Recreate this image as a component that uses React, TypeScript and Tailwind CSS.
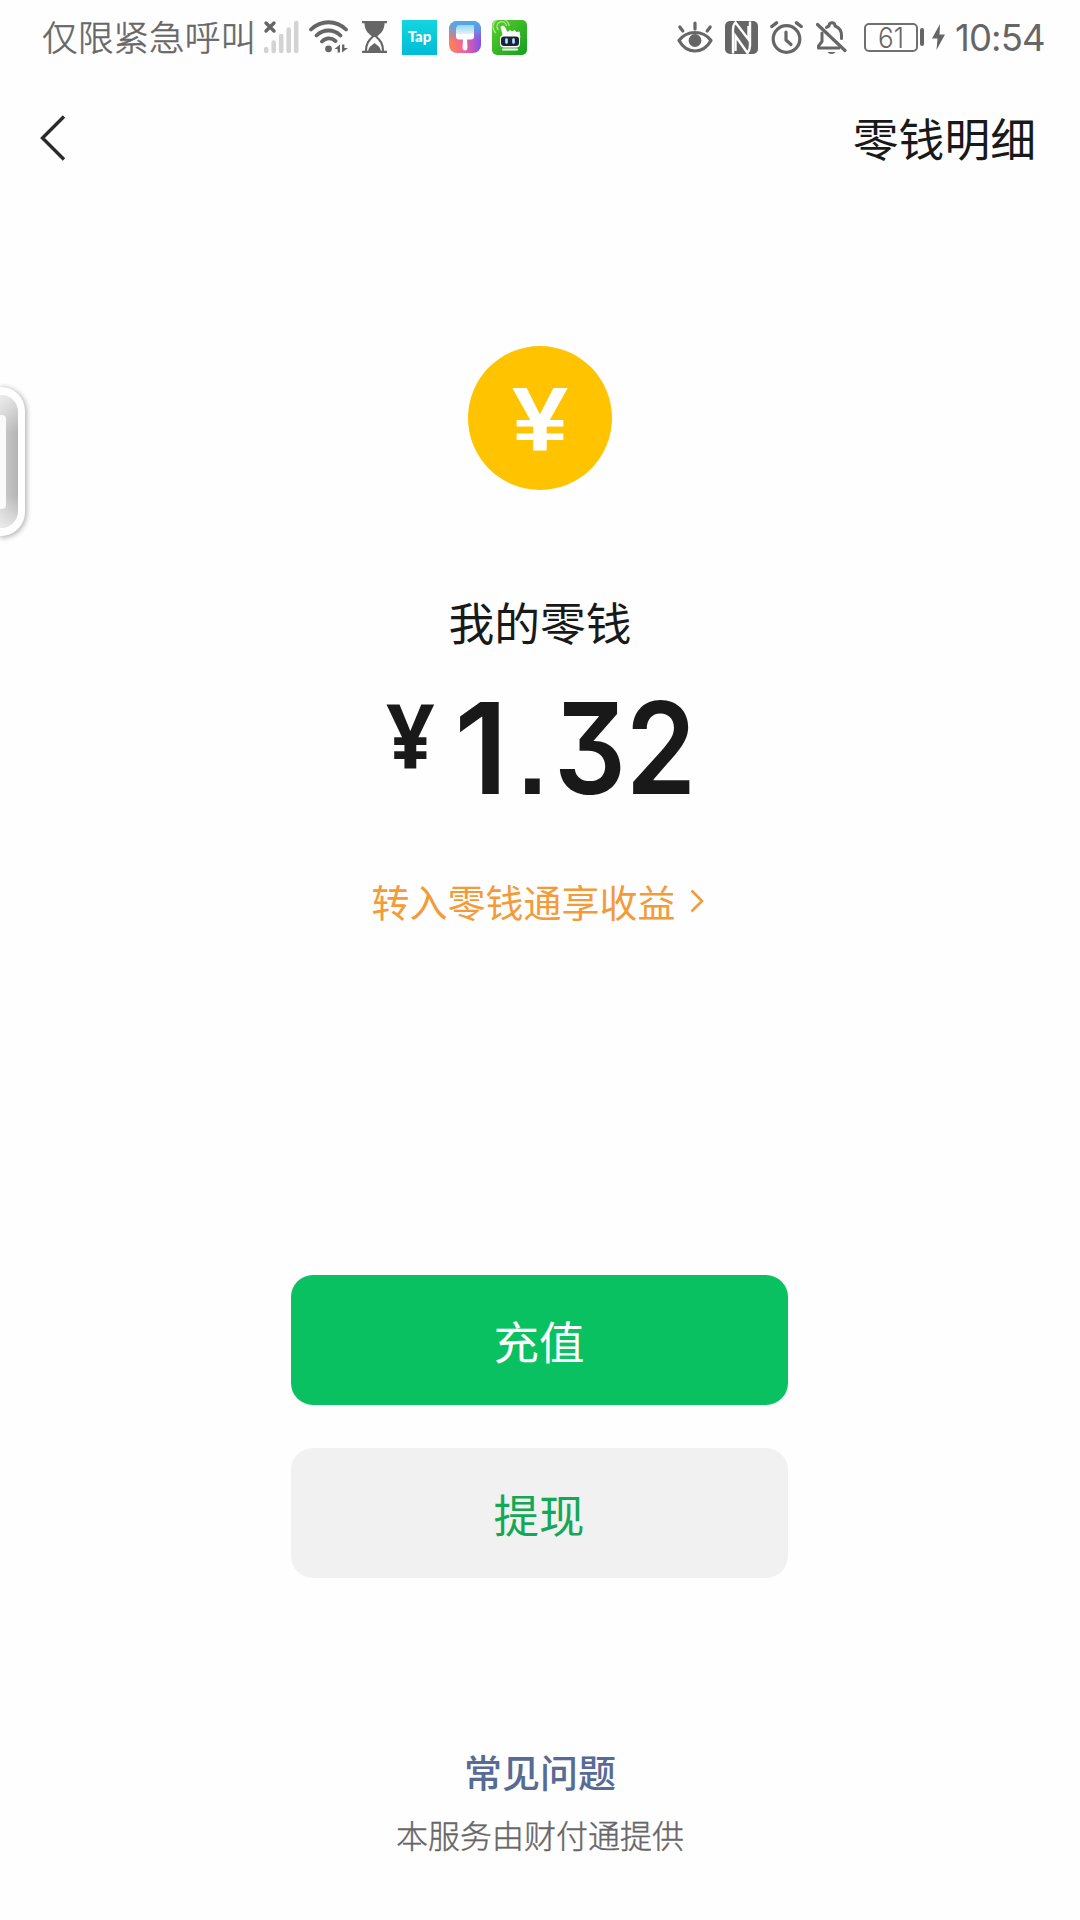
import { ReactNode } from 'react';

function SignalIcon() {
  return (
    <svg className="ml-[7px] h-[34px] w-9 shrink-0" viewBox="0 0 36 34" fill="none" strokeLinecap="round">
      <path d="M3 3l8 8M11 3l-8 8" stroke="#666" strokeWidth="3.4" />
      <path d="M3.2 29v2M10.7 22.5v8.5M18.2 16v15M25.7 9.5v21.500M33.200 3v28" stroke="#d3d3d3" strokeWidth="4.6" />
    </svg>
  );
}

function WifiIcon() {
  return (
    <svg className="ml-[10px] h-[34px] w-10 shrink-0" viewBox="0 0 40 34" fill="none">
      <path d="M2 9.500C12-.2 27-.2 37 9.500M7.500 15.500c7-6.700 17-6.700 24 0M13 21.500c4-4 9.500-4 13.500-.5" stroke="#666" strokeWidth="3.800" strokeLinecap="round" />
      <circle cx="19.500" cy="28.800" r="3.400" fill="#666" />
      <path d="M31 24.500v8h-2.400v-3.500H25.500zM33 32.500v-8h2.400v3.500H39z" fill="#666" />
    </svg>
  );
}

function HourglassIcon() {
  return (
    <svg className="ml-[13px] h-8 w-[25px] shrink-0" viewBox="0 0 25 32" fill="none">
      <path d="M0 1.200h25M0 30.800h25" stroke="#666" strokeWidth="2.200" />
      <path d="M2.500 2h20c0 7-3.300 10-8 14h-4c-4.700-4-8-7-8-14z" fill="#666" />
      <path d="M11 15.500c-4.500 4-7 7-7 14.500M14 15.500c4.500 4 7 7 7 14.500" stroke="#666" strokeWidth="2.200" />
      <path d="M12.500 22l3 2.500c2 1 3 3 3.500 6H6c.5-3 1.500-5 3.500-6z" fill="#666" />
    </svg>
  );
}

function BrushAppIcon() {
  return (
    <svg className="ml-3 h-8 w-8 shrink-0" viewBox="0 0 32 32">
      <defs>
        <linearGradient id="brush-bg" x1="0" y1="0" x2="1" y2="0">
          <stop offset="0" stopColor="#fb8550" />
          <stop offset=".5" stopColor="#f0629b" />
          <stop offset="1" stopColor="#8350ea" />
        </linearGradient>
        <linearGradient id="brush-top" x1="0" y1="0" x2="0" y2="1">
          <stop offset="0" stopColor="#43acf0" />
          <stop offset=".3" stopColor="#56a7e8" stopOpacity=".7" />
          <stop offset=".65" stopColor="#8a70e8" stopOpacity="0" />
        </linearGradient>
        <linearGradient id="brush-head" x1="0" y1="0" x2="0" y2="1">
          <stop offset="0" stopColor="#8fd8f4" />
          <stop offset="1" stopColor="#e5f0fa" />
        </linearGradient>
      </defs>
      <rect width="32" height="32" rx="8" fill="url(#brush-bg)" />
      <rect width="32" height="32" rx="8" fill="url(#brush-top)" />
      <path d="M9 4h16v9H7V7z" fill="url(#brush-head)" />
      <path d="M7 13h18v2.500q0 3-3 3h-4l.5 8.500q-.5 2.500-2.500 2.500T13.500 27l.5-8.500h-4q-3 0-3-3z" fill="#fff" />
    </svg>
  );
}

function RobotAppIcon() {
  return (
    <svg className="ml-[11px] h-[35px] w-[35px] shrink-0" viewBox="0 0 35 35">
      <defs>
        <linearGradient id="robot-bg" x1="0" y1="0" x2="1" y2="1">
          <stop offset="0" stopColor="#5bcf2c" />
          <stop offset="1" stopColor="#159f20" />
        </linearGradient>
      </defs>
      <rect width="35" height="35" rx="5" fill="url(#robot-bg)" />
      <path d="M4 13a8 8 0 1 1 13-7M6.500 10a4.800 4.800 0 1 1 8-4" fill="none" stroke="#a6e88b" strokeWidth="1.300" />
      <path d="M8.500 7q2.500-3 4.500 0l2.500 5 2.500-2 2 1.500 2.500-1.500 2 2 3-.5 1 6H11l-1-5z" fill="#fff" />
      <rect x="8" y="15" width="20" height="12.500" rx="4" fill="#fff" />
      <rect x="9" y="16.500" width="18" height="9.500" rx="3" fill="#17263a" />
      <path d="M14.500 19.500v3M21.500 19.500v3" stroke="#c5e6ff" strokeWidth="2.600" strokeLinecap="round" />
      <path d="M11 29.500h14" stroke="#fff" strokeWidth="2" strokeLinecap="round" />
    </svg>
  );
}

function EyeIcon() {
  return (
    <svg className="h-8 w-9 shrink-0" viewBox="0 0 36 32" fill="none" stroke="#666" strokeWidth="3.200" strokeLinecap="round">
      <path d="M2 19.500C10 8.800 26 8.800 34 19.500 26 33.500 10 33.500 2 19.500z" strokeLinejoin="round" />
      <circle cx="18" cy="19.500" r="6.400" fill="#666" stroke="none" />
      <path d="M2.800 6l3 4M18 2v6M33.200 6l-3 4" />
    </svg>
  );
}

function NfcIcon() {
  return (
    <svg className="ml-3 h-[33px] w-[33px] shrink-0" viewBox="0 0 33 33" fill="none">
      <rect width="33" height="33" rx="5" fill="#666" />
      <path d="M8 32.500V8.500Q8 4 10.500 1.500L23.500 18.500V5" stroke="#fff" strokeWidth="2.400" />
      <path d="M25 .500v24q0 4.500-2.500 7.500L10.500 15v15" stroke="#fff" strokeWidth="2.400" />
    </svg>
  );
}

function AlarmIcon() {
  return (
    <svg className="ml-3 h-[33px] w-[33px] shrink-0" viewBox="0 0 33 33" fill="none" stroke="#666" strokeLinecap="round" strokeLinejoin="round">
      <circle cx="16.500" cy="18" r="13.300" strokeWidth="3.200" />
      <path d="M16 11v8l5 4.500" strokeWidth="3.200" />
      <path d="M1.800 5.500L6.500 1.800M31.200 5.500l-4.700-3.700" strokeWidth="3.400" />
    </svg>
  );
}

function BellOffIcon() {
  return (
    <svg className="ml-[13px] h-[33px] w-[31px] shrink-0" viewBox="0 0 31 33" fill="none" stroke="#666" strokeWidth="3" strokeLinecap="round" strokeLinejoin="round">
      <path d="M1.500 3.500l27.500 26" strokeWidth="3.200" />
      <path d="M6 12v8.500L2.500 25v2H23M10.500 6.500q1-1 2.500-1.500 0-3.200 3-3.200T19 5q6.500 2.500 6.500 9.500v3" />
      <path d="M11.500 31h8q-1 2-4 2t-4-2z" fill="#666" stroke="none" />
    </svg>
  );
}

function Battery({ level }: { level: number }) {
  return (
    <div className="ml-[17px] flex shrink-0 items-center">
      <div className="flex h-[29px] w-[54px] items-center justify-center rounded-[5px] border-2 border-[#707070] pt-px font-['Inter'] text-[28px] font-light leading-none">
        <span className="scale-x-[0.93]">{level}</span>
      </div>
      <div className="ml-[2px] h-[18px] w-[4px] rounded-full bg-[#666]" />
      <svg className="ml-2 h-[26px] w-[13px]" viewBox="0 0 13 26">
        <path d="M8 0L0 14.500h5.500L4.500 26 13 10.500H7.500z" fill="#666" />
      </svg>
    </div>
  );
}

function StatusBar() {
  return (
    <div className="flex h-[74px] items-center pl-[42px] pr-[35px] text-[#666]">
      <span className="relative -top-px w-[214px] whitespace-nowrap text-[35.700px] font-light leading-none [-webkit-text-stroke:0.5px_#666]">仅限紧急呼叫</span>
      <SignalIcon />
      <WifiIcon />
      <HourglassIcon />
      <div className="ml-[15px] flex h-[35px] w-[35px] shrink-0 items-center justify-center bg-gradient-to-b from-[#14d5e0] to-[#00bcd6] pb-px font-['Lato'] text-[15px] font-black leading-none text-white">
        Tap
      </div>
      <BrushAppIcon />
      <RobotAppIcon />
      <div className="ml-auto flex items-center">
        <EyeIcon />
        <NfcIcon />
        <AlarmIcon />
        <BellOffIcon />
        <Battery level={61} />
        <span className="ml-[10px] w-[90px] whitespace-nowrap pt-[3px] font-['Inter'] text-[36.500px] leading-none tracking-[-0.9px]">10:54</span>
      </div>
    </div>
  );
}

function SideHandle() {
  return (
    <div className="absolute left-0 top-[387px] h-[149px] w-[25px] rounded-r-[24px] bg-white pt-[8px] shadow-[1px_1px_5px_1px_rgba(0,0,0,0.28)]">
      <div className="h-[133px] w-[18px] overflow-hidden rounded-r-[17px] bg-gradient-to-r from-[#cfcfcf] to-[#b4b4b4]">
        <div className="h-full bg-[linear-gradient(to_bottom,rgba(255,255,255,0.6),transparent_28%,transparent_75%,rgba(255,255,255,0.6))] pt-[20px]">
          <div className="h-[94px] w-[6px] rounded-r-[4px] bg-[#fafafa]" />
        </div>
      </div>
    </div>
  );
}

function Amount() {
  return (
    <div className="mt-[41px] flex h-[126px] items-start text-center font-['Inter'] text-[127px] font-semibold leading-[126px]">
      <span className="mt-[6px] flex w-[53px] scale-x-[0.95] justify-center font-['Noto_Sans'] text-[89px] font-bold leading-[88px]">¥</span>
      <span className="ml-[14px] flex w-[60px] justify-center">1</span>
      <span className="mt-[10px] flex w-[43px] justify-center font-['Liberation_Sans'] text-[104px] font-bold">.</span>
      <span className="flex w-[72px] scale-x-[0.89] justify-center [font-feature-settings:'cv09']">3</span>
      <span className="flex w-[70px] scale-x-[0.89] justify-center">2</span>
    </div>
  );
}

function ActionButton({ className, children }: { className: string; children: ReactNode }) {
  return (
    <button className={`flex h-[130px] w-[497px] items-center justify-center rounded-[22px] pt-px text-[45.500px] leading-none ${className}`}>
      {children}
    </button>
  );
}

export default function App() {
  return (
    <div className="relative flex h-[1920px] w-[1080px] flex-col overflow-hidden bg-[#fefefe] font-['Noto_Sans_CJK_SC',sans-serif] text-[#191919]">
      <StatusBar />

      <header className="flex h-[128px] items-center justify-between pl-[40px] pr-[44px]">
        <svg className="h-[46px] w-[26px]" viewBox="0 0 26 46" fill="none">
          <path d="M24 1.500L2.500 23 24 44.500" stroke="#2b2b2b" strokeWidth="3.400" />
        </svg>
        <span className="text-[45.800px] leading-none">零钱明细</span>
      </header>

      <main className="flex flex-1 flex-col items-center">
        <div className="mt-[144px] flex h-[144px] w-[144px] items-center justify-center rounded-full bg-[#ffc300] pt-[4px]">
          <span className="scale-x-[1.12] font-['Liberation_Sans'] text-[90px] font-bold leading-none text-white">¥</span>
        </div>
        <h1 className="mt-[108px] text-[45.800px] leading-[46px]">我的零钱</h1>
        <Amount />
        <a className="mr-[5px] mt-[67px] flex items-center text-[38px] leading-[46px] text-[#f39b39]">
          转入零钱通享收益
          <svg className="ml-[14px] h-6 w-[14px]" viewBox="0 0 14 24" fill="none">
            <path d="M1.500 1.500L12 12 1.500 22.500" stroke="#f39b39" strokeWidth="2.600" />
          </svg>
        </a>
        <div className="mr-[2px] mt-[351px] flex flex-col gap-[43px]">
          <ActionButton className="bg-[#09c160] text-white">充值</ActionButton>
          <ActionButton className="bg-[#f1f1f1] text-[#14a856]">提现</ActionButton>
        </div>
      </main>

      <footer className="flex h-[172px] flex-col items-center">
        <a className="text-[38px] font-medium leading-[46px] text-[#576b95]">常见问题</a>
        <p className="mt-[20px] text-[32px] font-light leading-[40px] text-[#666] [-webkit-text-stroke:0.4px_#666]">本服务由财付通提供</p>
      </footer>

      <SideHandle />
    </div>
  );
}
